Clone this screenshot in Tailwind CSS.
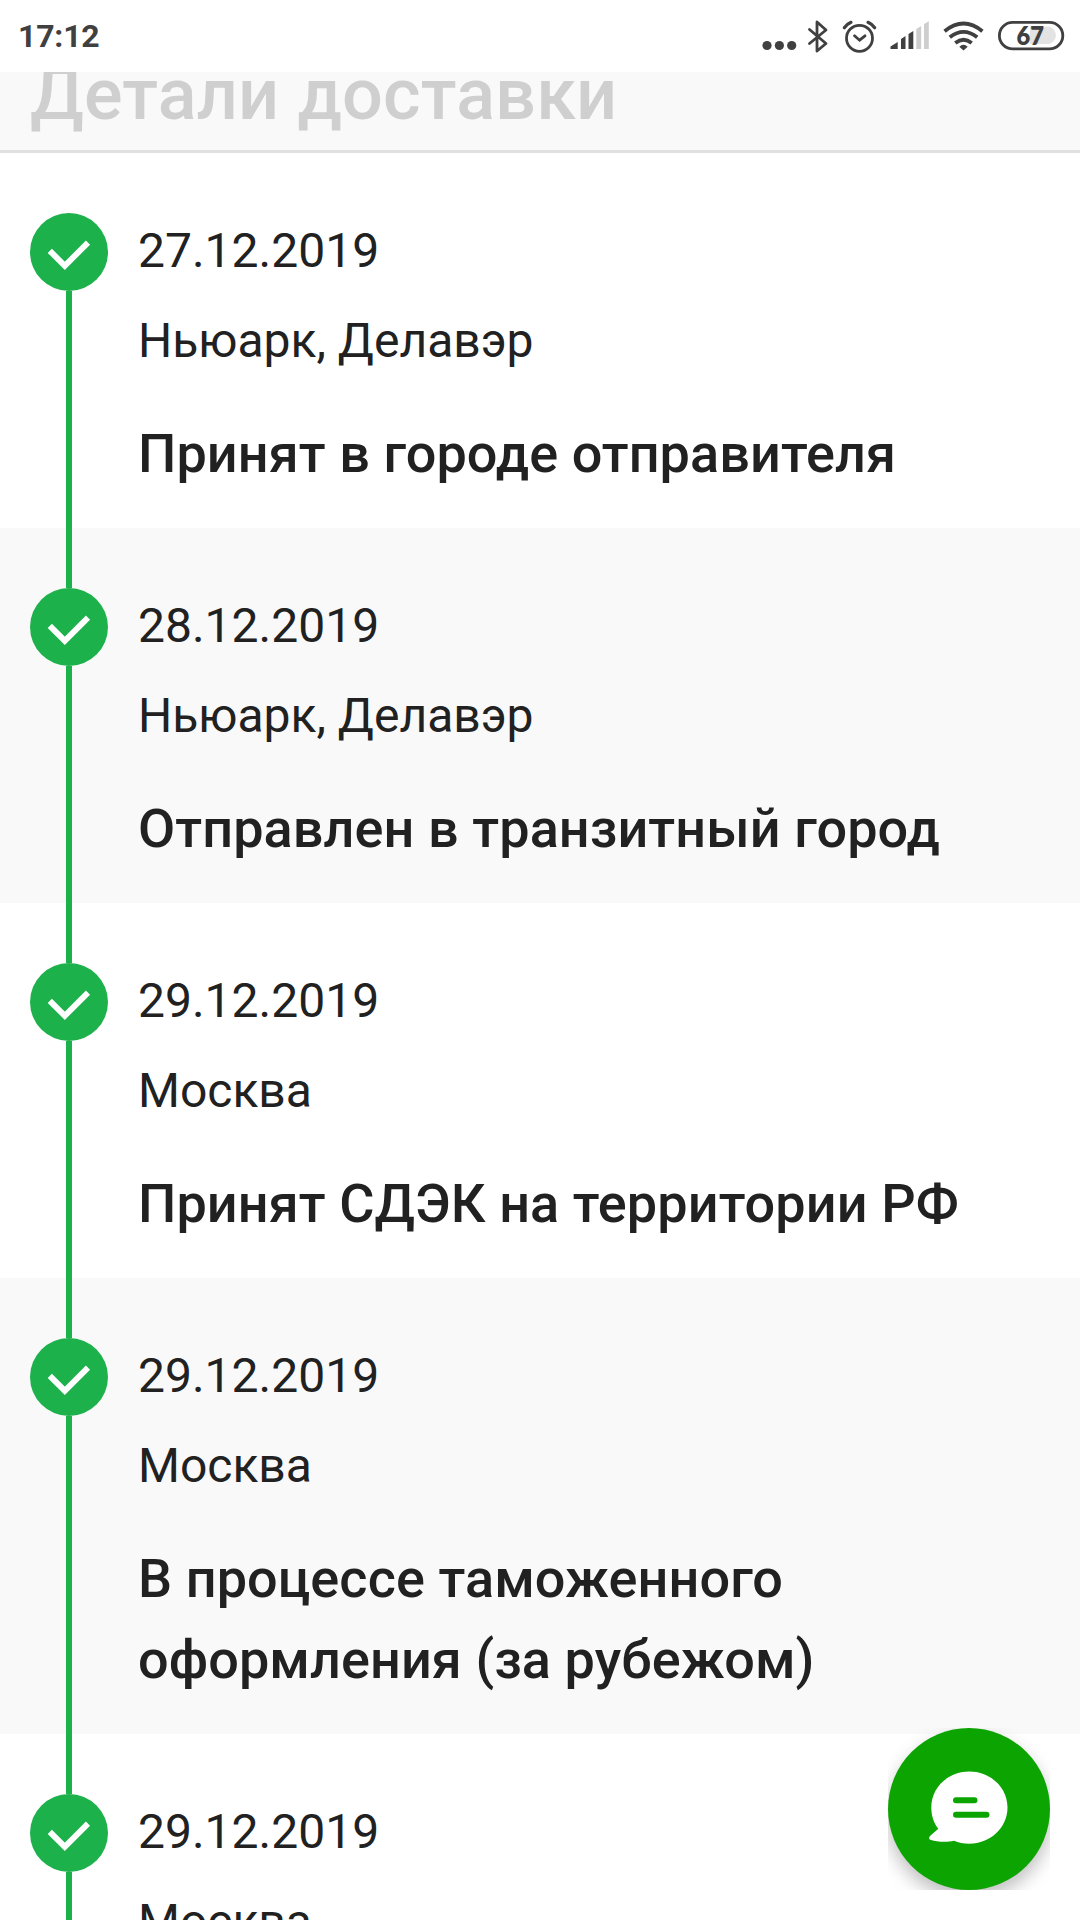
<!DOCTYPE html>
<html lang="ru">
<head>
<meta charset="utf-8">
<title>Детали доставки</title>
<script src="https://cdn.jsdelivr.net/npm/@tailwindcss/browser@4"></script>
</head>
<body class="bg-white">
<div class="relative flex h-[1920px] w-[1080px] flex-col overflow-hidden bg-white font-['Roboto',sans-serif] text-[#212121]">
  <header class="flex h-[72px] shrink-0 items-center justify-between bg-white pl-[18px]">
    <span class="text-[32px] leading-[74px] font-bold tracking-[-0.2px] text-[#404040]">17:12</span>
    <svg class="h-[72px] w-[340px]" viewBox="0 0 340 72" fill="none" stroke="#404040">
      <g fill="#404040" stroke="none"><circle cx="27" cy="45.5" r="4.6"/><circle cx="39.4" cy="45.5" r="4.6"/><circle cx="51.7" cy="45.5" r="4.6"/></g>
      <path d="M69.500 29.500 86 43.500 77 51V22L86 30 69.500 43.500" stroke-width="2.800" stroke-linecap="round" stroke-linejoin="round"/>
      <circle cx="119.500" cy="38.300" r="13" stroke-width="2.800"/>
      <path d="M114.500 35.800 119.600 40.200 125 35.800" stroke-width="2.800" stroke-linecap="round"/>
      <path d="M104.300 27.700Q107 24 111 22.300M134.700 27.700Q132 24 128 22.300" stroke-width="3.200" stroke-linecap="round"/>
      <g stroke="none"><path fill="#404040" d="M150.500 49V46.500L157.700 42V49ZM161 49V39L165.500 36V49ZM168.500 49V34L173.300 31V49Z"/><path fill="#cecece" d="M176.300 49V29L181.200 26V49ZM184 49V24L188.800 21.300V49Z"/></g>
      <path d="M204.600 31.200Q223.500 15.800 242.400 31.200M209.800 37.300Q223.500 26.500 237.200 37.300M215.300 43Q223.500 36.500 231.700 43" stroke-width="3.800"/>
      <path d="M219.300 46.700Q223.500 43 227.700 46.700L223.500 50.500Z" fill="#404040" stroke="none"/>
      <path d="M290 26.500H309A9 9 0 0 1 309 44H290Z" fill="#e3e3e3" stroke="none"/>
      <rect x="259.400" y="22.400" width="63.400" height="26.500" rx="13.250" stroke-width="2.800"/>
      <text x="276.500" y="45" textLength="27.500" lengthAdjust="spacingAndGlyphs" font-family="Lato" font-size="26" font-weight="800" fill="#404040" stroke="none">67</text>
    </svg>
  </header>
  <div class="h-[81px] shrink-0 overflow-hidden border-b-[3px] border-[#e0e0e0] bg-[#f9f9f9] px-[30px]">
    <h1 class="-mt-[19px] text-[72px] leading-[84px] font-medium tracking-[0.150px] whitespace-nowrap text-[#cfcfcf]">Детали доставки</h1>
  </div>
  <ol id="steps" class="flex flex-col"></ol>
  <button class="absolute top-[1728px] left-[888px] size-[162px] overflow-hidden" aria-label="Чат">
    <span class="block size-[162px] rounded-full bg-[#0ca401] shadow-[0_9px_18px_rgba(0,0,0,0.25)]">
      <svg class="size-[162px]" viewBox="0 0 162 162"><path fill="#fff" d="M81.300 43.500C102.500 43.500 119.500 59.500 119.500 79.500S102.500 115.700 81.300 115.700C75.500 115.700 70.500 114.700 66 112.800C59 114.300 49 114 43 112C40.500 111 40.500 109.200 42.500 107.600L50.300 100.800C45.500 94.500 43.300 87.500 43.300 79.500C43.300 59.500 60 43.500 81.300 43.500Z"/><path d="M68 72.200H86.500M68 86.700H98.500" stroke="#0ca401" stroke-width="6" stroke-linecap="round"/></svg>
    </span>
  </button>
</div>
<template id="step">
  <li class="flex px-[30px] odd:bg-white even:bg-[#f9f9f9]">
    <div class="flex w-[78px] shrink-0 flex-col items-center">
      <i data-top class="h-[60px] w-[6px] bg-[#1db14b]"></i>
      <svg class="size-[78px] shrink-0" viewBox="0 0 78 78"><circle cx="39" cy="39" r="39" fill="#1db14b"/><path d="M19.800 37.800 34.800 52.800 58 29.600" fill="none" stroke="#fff" stroke-width="5.900"/></svg>
      <i class="w-[6px] flex-1 bg-[#1db14b]"></i>
    </div>
    <div class="pt-[62px] pb-[34px] pl-[30px]">
      <p data-date class="text-[48px] leading-[72px]"></p>
      <p data-place class="mt-[18px] text-[48px] leading-[72px]"></p>
      <p data-status class="mt-[36px] w-[840px] text-[54px] leading-[81px] font-medium tracking-[0.090px]"></p>
    </div>
  </li>
</template>
<script>
const steps = [
  ["27.12.2019", "Ньюарк, Делавэр", "Принят в городе отправителя"],
  ["28.12.2019", "Ньюарк, Делавэр", "Отправлен в транзитный город"],
  ["29.12.2019", "Москва", "Принят СДЭК на территории РФ"],
  ["29.12.2019", "Москва", "В процессе таможенного оформления (за рубежом)"],
  ["29.12.2019", "Москва", ""]
];
steps.forEach(([date, place, status], i) => {
  const row = document.getElementById("step").content.cloneNode(true);
  if (i === 0) row.querySelector("[data-top]").classList.add("invisible");
  row.querySelector("[data-date]").textContent = date;
  row.querySelector("[data-place]").textContent = place;
  row.querySelector("[data-status]").textContent = status;
  document.getElementById("steps").append(row);
});
</script>
</body>
</html>
